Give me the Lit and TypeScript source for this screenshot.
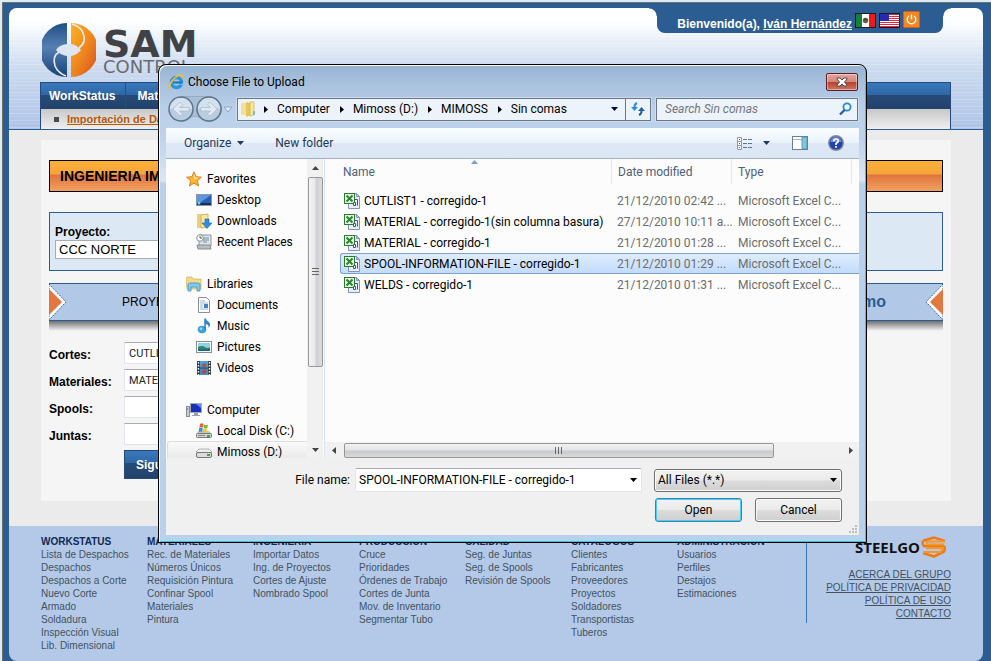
import { LitElement, html, svg, css, nothing } from "lit";
import { customElement, state } from "lit/decorators.js";
import { classMap } from "lit/directives/class-map.js";

const icon = (body: unknown, w = 16, h = 16) =>
  html`<svg width=${w} height=${h} viewBox="0 0 ${w} ${h}" aria-hidden="true">${body}</svg>`;

const drive = svg`<path d="M3 8h10l3 3H0z" fill="#e3e3e3"/><path d="M3 8h10l2 2H1z" fill="#c4c4c4"/><rect x=".5" y="10.500" width="15" height="4" rx="1" fill="#d5d5d5" stroke="#777"/><rect x="2" y="12" width="7" height="1" fill="#888"/><rect x="11" y="12" width="3" height="2" fill="#35b02c"/>`;

const ICONS: Record<string, unknown> = {
  star: icon(svg`<path d="M8 .8l2.100 4.900 5.300.5-4 3.500 1.200 5.300L8 12.200 3.400 15l1.200-5.300-4-3.500 5.300-.5z" fill="#fdb52d" stroke="#d9822b"/><path d="M8 2.500l1.400 4 3.600.3-5 2z" fill="#ffe596"/>`),
  desktop: icon(svg`<rect x=".5" y="2.500" width="15" height="11" fill="#2c60b4" stroke="#8a97a8"/><path d="M1 3h14L5 10H1z" fill="#5d98de"/><path d="M1 11h14v2H1z" fill="#1c2f4d"/><circle cx="3" cy="11" r="1.500" fill="#6bd1ff"/>`),
  downloads: icon(svg`<path d="M1 1h5v14H1z" fill="#ecd07a"/><path d="M5 2l7-1v13l-7 1z" fill="#f7e7a8" stroke="#d8b654"/><path d="M9 6h4v4h3l-5 5.500L6 10h3z" fill="#2e8fdc" stroke="#1b65ad" stroke-width=".6"/>`),
  recent: icon(svg`<path d="M3 1h12v11H3z" fill="#dfe3e6" stroke="#90979c"/><path d="M7 4h6M7 6h6M7 8h4" stroke="#7390a8"/><path d="M1 11h13l1 4H2z" fill="#b9bec2" stroke="#878c90"/><circle cx="4" cy="4" r="3.300" fill="#fff" stroke="#8a8f94"/><path d="M4 2v2h2" stroke="#555" fill="none"/>`),
  libraries: icon(svg`<path d="M0 3l1-2h5l1 2h8v10H1z" fill="#f1d88a" stroke="#d3b055" stroke-width=".7"/><path d="M2 15V9q0-2 2-2h8q2 0 2 2v6h-3v-4H5v4z" fill="#7ecbf0" stroke="#3f92c8" stroke-width=".8"/>`),
  documents: icon(svg`<path d="M2.500.5h8l3 3v12h-11z" fill="#fff" stroke="#8a9099"/><path d="M4 4h5M4 6h8M4 8h3M4 10h3M4 12h8" stroke="#9fb4cb"/><rect x="8" y="7" width="4" height="4" fill="#3f83c9"/>`),
  music: icon(svg`<ellipse cx="6" cy="11.500" rx="4.300" ry="3.700" fill="#3ba0dc"/><path d="M8.200 12V.5h1.600q.7 2 3 3.600Q15.500 6.500 12.500 10q.8-3.500-2.700-4v6z" fill="#2f86c9"/><circle cx="5" cy="10.800" r="1.400" fill="#9ad8f8"/>`),
  pictures: icon(svg`<rect x=".5" y="2.500" width="15" height="11" fill="#fff" stroke="#8a9099"/><rect x="2" y="4" width="12" height="8" fill="#8fd0ee"/><path d="M2 8q4-2 7 0t5 0v2H2z" fill="#2f8a5a"/><path d="M2 10h12v2H2z" fill="#1f6a8a"/>`),
  videos: icon(svg`<rect x="1" y="1" width="14" height="14" fill="#343a40"/><rect x="4" y="1" width="8" height="6.500" fill="#4f9cd6"/><rect x="4" y="8.500" width="8" height="6.500" fill="#3f8ccc"/><path d="M5 6l3-3 3 2-2 2zM5 12l4-3 2 3-3 2z" fill="#b34a3c"/><path d="M2.500 2v13M13.500 2v13" stroke="#fff" stroke-width="1.400" stroke-dasharray="1.500 1.500"/>`),
  computer: icon(svg`<rect x=".5" y="4.500" width="3" height="10" fill="#c9cdd1" stroke="#888e94"/><rect x="4.500" y="1.500" width="11" height="9" fill="#1633b8" stroke="#a4abb3"/><path d="M10 2h5v4z" fill="#5f8ef0"/><path d="M8 11h4v2h2v1H6v-1h2z" fill="#9aa1a8"/><rect x="1" y="6" width="1" height="2" fill="#3c3"/>`),
  windrive: icon(svg`${drive}<path d="M4 1q2-1.500 3.500 0L7 4.500Q5 3.500 3.400 4.500z" fill="#e8602c"/><path d="M8 1.500q2 1 4 0l-.6 3.500Q9.500 6 7.500 5z" fill="#7ab83a"/><path d="M3.200 5Q5 4 6.800 5L6.200 9Q4.500 8 2.700 9z" fill="#3b8de0"/><path d="M7.300 5.500q2 1 4 0l-.7 3.500Q8.700 10 6.700 9z" fill="#f8c52b"/>`),
  drive: icon(svg`<path d="M3 5h10l3 3v1H0V8z" fill="#ededed" stroke="#999" stroke-width=".7"/><rect x=".5" y="8.500" width="15" height="5" rx="1.500" fill="#d9dbdd" stroke="#777"/><rect x="11" y="10" width="3" height="2" fill="#35b02c"/>`),
  excel: icon(svg`<path d="M4.500.5h8l3 3v12h-11z" fill="#e8effa" stroke="#7e95c4"/><path d="M12.500.5l3 3h-3z" fill="#b8c8e8" stroke="#7e95c4"/><rect x=".5" y=".5" width="10" height="10" fill="#e8f5e4" stroke="#2d7a31"/><path d="M2.500 2.500l6 6M8.500 2.500l-6 6" stroke="#2a8630" stroke-width="2"/><path d="M11 6.500h2.500v6M9.500 9.500h2v3h-2z" stroke="#3b5590" fill="#fff"/>`),
  ie: icon(svg`<circle cx="8.500" cy="8.500" r="5" fill="none" stroke="#2a95dd" stroke-width="3.600"/><path d="M5 8.500h9" stroke="#1d78c4" stroke-width="2.200"/><path d="M10 10.800h6v-1.500z" fill="#a9c0db"/><path d="M2 15.500Q-.5 14 3 8.500T11 1.500Q15.500 0 14.600 4" fill="none" stroke="#f0bd35" stroke-width="1.800"/>`),
  folder: icon(svg`<path d="M0 2h5v12H0z" fill="#f2e097"/><path d="M5 1l5 1v12l-5 2z" fill="#e3c65c"/><path d="M9 1h4v13l-4 1z" fill="#f6e6a0" stroke="#d4b64f" stroke-width=".8"/><path d="M12 10h2v4h-2z" fill="#79b6e2"/>`, 15, 16),
  refresh: icon(svg`<path d="M7 2Q4.500 3 4.500 6v2" fill="none" stroke="#2d8fd6" stroke-width="2"/><path d="M1 6h7l-3.500 4z" fill="#2d8fd6"/><path d="M9 14q2.500-1 2.500-4V8" fill="none" stroke="#2060a8" stroke-width="2"/><path d="M8 10h7l-3.500-4z" fill="#2060a8"/>`),
  search: icon(svg`<circle cx="9" cy="5" r="3.600" fill="#eaf5fd" stroke="#2c86cb" stroke-width="1.800"/><path d="M6.500 8L2 12.500" stroke="#2d5fae" stroke-width="2.400"/>`, 14, 14),
  view: icon(svg`<path d="M.5.500h4v12h-4zM.5 4.500h4M.5 8.500h4" fill="#fff" stroke="#8b9aae"/><path d="M2 2h1v1H2zM2 10h1v1H2z" fill="#4a6a94"/><path d="M2 6h1v1H2z" fill="#d22"/><path d="M6 2.500h9M6 6.500h9M6 10.500h9" stroke="#5f7796" stroke-dasharray="4 1"/>`, 16, 13),
  pane: icon(svg`<rect x=".5" y=".5" width="15" height="13" fill="#fff" stroke="#6d7f95"/><path d="M1 3.500h14" stroke="#a8b6c8"/><rect x="10" y="1" width="5" height="12" fill="#7cc9e0" stroke="#4e8aa5" stroke-width=".8"/>`, 16, 14),
  help: icon(svg`<circle cx="8" cy="8" r="7.300" fill="#2343ab" stroke="#8a8f9c" stroke-width="1.400"/><path d="M2.500 7a5.500 5 0 0 1 11 0z" fill="#6c90df"/><path d="M5.700 6.300Q5.800 4 8 4t2.300 2Q10.300 7.300 8 8.500V10" fill="none" stroke="#fff" stroke-width="1.700"/><rect x="7.100" y="11" width="1.800" height="1.700" fill="#fff"/>`),
  close: icon(svg`<path d="M2 1h3l2 2 2-2h3v1L9.500 5 12 8v1H9L7 7 5 9H2V8l2.500-3L2 2z" fill="#fff" stroke="#5a4a50"/>`, 14, 10),
  history: icon(svg`<path d="M14 1.500h28a12.500 12.500 0 0 1 0 25q-6 0-9-4-5-3-10 0-3 4-9 4z" fill="#a9bfd6" stroke="#96abc3"/><g fill="#b9cde1" stroke="#60748b" stroke-width="1.500"><circle cx="14" cy="14" r="12"/><circle cx="42" cy="14" r="12"/></g><g fill="#d3e0ed"><path d="M3 14a11 11 0 0 1 22 0q-11-5-22 0z"/><path d="M31 14a11 11 0 0 1 22 0q-11-5-22 0z"/></g><g fill="#e1eaf3" stroke="#a9bccf" stroke-width=".7"><path d="M6 14l7-7 2.500 2.500-3 3H22v3.500h-9.500l3 3L13 21z"/><path d="M50 14l-7-7-2.500 2.500 3 3H34v3.500h9.500l-3 3L43 21z"/></g>`, 56, 28),
  down: icon(svg`<path d="M0 0h7L3.500 4z" fill="currentColor"/>`, 7, 4),
  up: icon(svg`<path d="M0 4h7L3.500 0z" fill="currentColor"/>`, 7, 4),
  right: icon(svg`<path d="M0 0v7l4-3.500z" fill="currentColor"/>`, 4, 7),
  left: icon(svg`<path d="M4 0v7L0 3.500z" fill="currentColor"/>`, 4, 7),
  mexico: icon(svg`<rect width="21" height="15" fill="#151a2c"/><rect x="1" y="1" width="6" height="13" fill="#12803a"/><rect x="7" y="1" width="7" height="13" fill="#fff"/><rect x="14" y="1" width="6" height="13" fill="#f01818"/><circle cx="10.500" cy="7.500" r="2.800" fill="#70603c"/><circle cx="10.500" cy="6.500" r="1.300" fill="#2f4a30"/>`, 21, 15),
  usa: icon(svg`<rect width="21" height="15" fill="#151a2c"/><rect x="1" y="1" width="19" height="13" fill="#fff"/><path d="M1 1.500h19M1 3.500h19M1 5.500h19M1 7.500h19M1 9.500h19M1 11.500h19M1 13.500h19" stroke="#e8283a"/><rect x="1" y="1" width="9" height="7" fill="#2a2ab0"/>`, 21, 15),
  power: icon(svg`<rect x=".5" y=".5" width="16" height="16" rx="1" fill="#f5861f" stroke="#c8641a"/><path d="M6 5a4.300 4.300 0 1 0 5 0M8.500 3.500v5" fill="none" stroke="#fff" stroke-width="1.400"/>`, 17, 17),
};

const LOGO = html`<svg width="54" height="54" viewBox="0 0 54 54" aria-hidden="true">
  <defs>
    <linearGradient id="lb" x1="0" y1="0" x2="0" y2="1"><stop offset="0" stop-color="#1f4f86"/><stop offset=".45" stop-color="#5680b4"/><stop offset="1" stop-color="#174276"/></linearGradient>
    <linearGradient id="lo" x1="0" y1="0" x2="1" y2="1"><stop offset="0" stop-color="#fbb321"/><stop offset=".5" stop-color="#f0861f"/><stop offset="1" stop-color="#d34e1b"/></linearGradient>
  </defs>
  <path d="M25 0a27 27 0 0 0 0 54z" fill="url(#lb)"/>
  <path d="M29 0a27 27 0 0 1 0 54z" fill="url(#lo)"/>
  <path d="M14 27q3-5 11-6h4q6 1 10 6-4 5-10 6h-4q-7-1-11-6z" fill="#dde6f4"/>
  <path d="M17 29Q10 33 13 43q3 7 11 10M37 25q8-6 4-15Q39 4 30 1" fill="none" stroke="#e6ecf6" stroke-width="1.600"/>
</svg>`;

const STEEL = html`<svg width="26" height="23" viewBox="0 0 26 23" aria-hidden="true">
  <path d="M24 5L13 1.500 3 4.500Q0 7 3 10h19q3 1 1 5.500l-10 5L2 17" fill="none" stroke="#ee7a18" stroke-width="2.600"/>
  <path d="M24 5.500H7Q4 6.500 7 8.500h16M2 16h18l2-4H5" fill="none" stroke="#f9962a" stroke-width="2"/>
</svg>`;

const FOOTER: [string, string[]][] = [
  ["WORKSTATUS", ["Lista de Despachos", "Despachos", "Despachos a Corte", "Nuevo Corte", "Armado", "Soldadura", "Inspección Visual", "Lib. Dimensional"]],
  ["MATERIALES", ["Rec. de Materiales", "Números Únicos", "Requisición Pintura", "Confinar Spool", "Materiales", "Pintura"]],
  ["INGENIERIA", ["Importar Datos", "Ing. de Proyectos", "Cortes de Ajuste", "Nombrado Spool"]],
  ["PRODUCCIÓN", ["Cruce", "Prioridades", "Órdenes de Trabajo", "Cortes de Junta", "Mov. de Inventario", "Segmentar Tubo"]],
  ["CALIDAD", ["Seg. de Juntas", "Seg. de Spools", "Revisión de Spools"]],
  ["CATÁLOGOS", ["Clientes", "Fabricantes", "Proveedores", "Proyectos", "Soldadores", "Transportistas", "Tuberos"]],
  ["ADMINISTRACIÓN", ["Usuarios", "Perfiles", "Destajos", "Estimaciones"]],
];

@customElement("site-header")
class SiteHeader extends LitElement {
  static styles = css`
    :host { display: block; font: 12px/16px "Liberation Sans", Arial, sans-serif; }
    a { color: inherit; }
    .header {
      background:
        repeating-linear-gradient(rgba(255, 255, 255, .2) 0 1px, transparent 1px 3px, rgba(255, 255, 255, .1) 3px 4px, transparent 4px 7px),
        linear-gradient(#fff 0, #fdfeff 12%, #cbdaef 50%, #aec4e6 100%);
      border-bottom: 1px solid #2b5d93;
      border-radius: 8px 8px 0 0;
    }
    .top { display: flex; justify-content: space-between; align-items: flex-start; height: 74px; }
    .brand { display: flex; gap: 7px; padding: 15px 0 0 33px; }
    .words { display: flex; flex-direction: column; font-family: "DejaVu Sans", sans-serif; color: #414246; }
    .sam { font-size: 38px; line-height: 30px; font-weight: bold; padding-top: 6px; }
    .control { font-size: 18px; line-height: 16px; color: #6b6c70; }
    .tab {
      position: relative; display: flex; align-items: center; gap: 3px; height: 25px; box-sizing: border-box;
      margin-right: 40px; padding: 0 23px 0 20px; background: #2b5d93; color: #fff; font-weight: bold;
      border-radius: 0 0 8px 8px;
    }
    .tab::before, .tab::after { content: ""; position: absolute; top: 0; width: 8px; height: 8px; }
    .tab::before { right: 100%; background: radial-gradient(circle at 0 100%, transparent 7px, #2b5d93 8px); }
    .tab::after { left: 100%; background: radial-gradient(circle at 100% 100%, transparent 7px, #2b5d93 8px); }
    .welcome { padding-top: 6px; }
    .tools { display: flex; align-items: center; gap: 3px; }
    .tools button { display: flex; border: 0; padding: 0; background: none; }
    .tools button.off { padding-bottom: 3px; }
    nav { margin: 0 32px 0 31px; border: solid #244a7a; border-width: 1px 1px 0; }
    .menu {
      display: flex; height: 26px;
      background: linear-gradient(#3a78bd 0, #2f67a4 45%, #264b78 46%, #22426c 100%);
    }
    .menu a {
      display: flex; align-items: center; padding: 0 10px 0 8px; color: #fff; font-weight: bold; text-decoration: none;
      border-right: 1px solid #2b4f7d;
    }
    .menu a + a { padding-left: 11px; }
    .sub {
      display: flex; align-items: center; gap: 8px; height: 20px; padding-left: 13px;
      background: linear-gradient(#c8c8c8, #efefef); font-size: 11px; font-weight: bold; color: #b75a0c;
    }
    .sub::before { content: ""; width: 5px; height: 5px; background: #444b50; }
  `;
  render() {
    return html`<header class="header">
      <div class="top">
        <div class="brand">${LOGO}<div class="words"><span class="sam">SAM</span><span class="control">CONTROL</span></div></div>
        <div class="tab">
          <span class="welcome">Bienvenido(a), <a href="#perfil">Iván Hernández</a></span>
          <div class="tools">
            <button aria-label="Español">${ICONS.mexico}</button>
            <button aria-label="English">${ICONS.usa}</button>
            <button class="off" aria-label="Salir">${ICONS.power}</button>
          </div>
        </div>
      </div>
      <nav>
        <div class="menu"><a href="#workstatus">WorkStatus</a><a href="#materiales">Materiales</a></div>
        <div class="sub"><a href="#importacion">Importación de Datos</a></div>
      </nav>
    </header>`;
  }
}

@customElement("import-form")
class ImportForm extends LitElement {
  static styles = css`
    :host { display: block; background: #ebebeb; padding: 10px 32px 25px; font: 12px/16px "Liberation Sans", Arial, sans-serif; }
    .sheet { background: #f5f5f5; min-height: 361px; box-sizing: border-box; padding: 20px 8px; color: #000; }
    h1 {
      margin: 0 0 20px; padding: 7px 10px; font-size: 14px; line-height: 16px; border: 1px solid #000;
      background: linear-gradient(#fbb037 0, #f5a53b 44%, #e0733d 46%, #f0a260 100%);
    }
    .project {
      display: flex; flex-direction: column; align-items: flex-start; box-sizing: border-box; height: 59px;
      padding: 11px 5px; border: 1px solid #2b5d93; background: #dde8f5; font-weight: bold;
    }
    .project select {
      appearance: none; width: 200px; height: 20px; padding: 0 3px; border: 1px solid #a5acb5; border-radius: 0;
      background: #fff; color: #000; font: 13px/16px "Liberation Sans", Arial, sans-serif;
    }
    .steps {
      display: flex; align-items: center; justify-content: space-between; margin-top: 12px; height: 36px;
      border: solid #2b5d93; border-width: 1px 0; background: #b1c8e6;
    }
    .steps svg { display: block; }
    .step { flex: 1; padding-left: 55px; }
    .step.last { flex: none; padding: 0 39px 0 0; font-size: 16px; font-weight: bold; color: #2b5d93; }
    .shade { height: 10px; background: linear-gradient(#707070, #f5f5f5); }
    form { display: grid; grid-template-columns: 75px 220px; gap: 5px 0; margin-top: 11px; align-items: center; }
    label { font-weight: bold; }
    form label { padding-top: 4px; }
    input {
      height: 22px; box-sizing: border-box; padding: 0 4px; border: 1px solid #e0e4ee; border-top-color: #a9abb3;
      color: #222; font: 11px/16px Roboto, "Open Sans", sans-serif; background: #fff;
    }
    .next {
      grid-column: 2; justify-self: start; height: 29px; padding: 0 11px; border: 1px solid #244a7a; color: #fff;
      font: bold 12px/16px "Liberation Sans", Arial, sans-serif;
      background: linear-gradient(#3a78bd 0, #2f67a4 44%, #264b78 46%, #22426c 100%);
    }
  `;
  render() {
    const rows = [["Cortes:", "CUTLIST1.csv"], ["Materiales:", "MATERIAL.csv"], ["Spools:", ""], ["Juntas:", ""]];
    return html`<main class="sheet">
      <h1>INGENIERIA IMPORTACIÓN</h1>
      <div class="project">
        <label for="proyecto">Proyecto:</label>
        <select id="proyecto"><option>CCC NORTE</option></select>
      </div>
      <div class="steps">
        <svg width="18" height="36" viewBox="0 0 18 36" aria-hidden="true"><path d="M0 0l17 18L0 36z" fill="#fff" stroke="#2b5d93" stroke-dasharray="1.500 1"/><path d="M0 5l13 13L0 31z" fill="#e2783f"/></svg>
        <span class="step">PROYECTO</span>
        <span class="step last">Último</span>
        <svg width="18" height="36" viewBox="0 0 18 36" aria-hidden="true"><path d="M18 0L1 18l17 18z" fill="#fff" stroke="#2b5d93" stroke-dasharray="1.500 1"/><path d="M18 5L5 18l13 13z" fill="#e2783f"/></svg>
      </div>
      <div class="shade"></div>
      <form>
        ${rows.map(([l, v], i) => html`<label for="f${i}">${l}</label><input id="f${i}" .value=${v}>`)}
        <button type="button" class="next">Siguiente</button>
      </form>
    </main>`;
  }
}

@customElement("site-footer")
class SiteFooter extends LitElement {
  static styles = css`
    :host {
      display: flex; padding: 10px 32px 9px; background: #b3c9e7; border-radius: 0 0 8px 8px;
      font: 10px/13px "Liberation Sans", Arial, sans-serif; color: #44525f;
    }
    .cols { display: grid; grid-template-columns: repeat(7, 106px); }
    h2 { margin: 0; font-size: 10px; line-height: 12px; color: #0e2a58; }
    ul { margin: 0; padding: 0; list-style: none; white-space: nowrap; }
    li a { color: inherit; text-decoration: none; }
    .side {
      flex: 1; display: flex; flex-direction: column; align-items: flex-end; align-self: flex-start;
      margin-left: 23px; border-left: 1px solid #3a74b8; height: 87px; white-space: nowrap;
    }
    .side a { color: inherit; }
    .steel {
      display: flex; align-items: center; gap: 1px; height: 22px; padding: 0 4px 10px 0; color: #111;
      font: bold 15px/20px "Open Sans", sans-serif;
    }
  `;
  render() {
    return html`
      <div class="cols">
        ${FOOTER.map(([t, items]) => html`<section><h2>${t}</h2><ul>${items.map((i) => html`<li><a href="#">${i}</a></li>`)}</ul></section>`)}
      </div>
      <div class="side">
        <div class="steel">STEELGO${STEEL}</div>
        ${["ACERCA DEL GRUPO", "POLÍTICA DE PRIVACIDAD", "POLÍTICA DE USO", "CONTACTO"].map((t) => html`<a href="#">${t}</a>`)}
      </div>`;
  }
}

const PLACES: { head: [string, string]; items: [string, string][] }[] = [
  { head: ["star", "Favorites"], items: [["desktop", "Desktop"], ["downloads", "Downloads"], ["recent", "Recent Places"]] },
  { head: ["libraries", "Libraries"], items: [["documents", "Documents"], ["music", "Music"], ["pictures", "Pictures"], ["videos", "Videos"]] },
  { head: ["computer", "Computer"], items: [["windrive", "Local Disk (C:)"], ["drive", "Mimoss (D:)"]] },
];

const FILES = [
  ["CUTLIST1 - corregido-1", "21/12/2010 02:42 ..."],
  ["MATERIAL - corregido-1(sin columna basura)", "27/12/2010 10:11 a..."],
  ["MATERIAL - corregido-1", "21/12/2010 01:28 ..."],
  ["SPOOL-INFORMATION-FILE - corregido-1", "21/12/2010 01:29 ..."],
  ["WELDS - corregido-1", "21/12/2010 01:31 ..."],
];

@customElement("file-dialog")
class FileDialog extends LitElement {
  @state() private selected = 3;

  static styles = css`
    :host { display: block; font: 12px/16px Roboto, "Open Sans", sans-serif; color: #000; }
    svg { display: block; flex: none; }
    button, input, select { font: inherit; color: inherit; margin: 0; }
    .window {
      border: 1px solid #000; border-radius: 8px 8px 0 0; padding: 0 7px 7px 7px;
      box-shadow: inset 1px 1px 0 #f2f8fd, inset -1px -1px 0 #35c6dd;
      background: linear-gradient(#98b4d2 0, #a9c2de 20px, #bad0ea 45px, #bfd3ea 75px, #dbe6f3 115px, #b9d1ea 119px);
    }
    .title { display: flex; align-items: center; gap: 4px; height: 31px; padding: 3px 1px 0 2px; box-sizing: border-box; }
    .title .name { flex: 1; }
    .close {
      display: flex; justify-content: center; align-items: center; width: 32px; height: 18px; padding: 0;
      border: 1px solid #5c1c28; border-radius: 2px; box-shadow: inset 0 0 0 1px rgba(255, 255, 255, .4);
      background: linear-gradient(#e3a79d 0, #d4867a 48%, #b6402c 50%, #cd7766 100%);
    }
    .bar { display: flex; align-items: center; height: 32px; gap: 5px; padding: 0 1px 6px 1px; box-sizing: border-box; }
    .bar .hist { display: flex; align-items: center; color: #dfeaf5; }
    .address, .search {
      display: flex; align-items: center; height: 23px; box-sizing: border-box; border: 1px solid #6c7785;
      box-shadow: 0 0 0 1px rgba(255, 255, 255, .3); background: #edf3fb;
    }
    .address { flex: 1; padding-left: 3px; margin-left: -1px; }
    .address button { border: 0; padding: 0 10px 0 9px; background: none; }
    .address button.drop { display: flex; align-items: center; margin-left: auto; padding: 0 7px; color: #000050; }
    .address button.go { display: flex; align-items: center; height: 21px; padding: 0 4px; border-left: 1px solid #6c7785; }
    .address .first { margin-left: 8px; }
    .search { width: 202px; padding: 0 5px 0 8px; }
    .search input { flex: 1; min-width: 0; border: 0; padding: 0; background: none; outline: none; }
    .search input::placeholder { font-style: italic; color: #71767d; opacity: 1; }
    .client { background: #f0f0f0; }
    .tools {
      display: flex; align-items: center; height: 31px; box-sizing: border-box; padding: 0 15px 0 18px; color: #1e395b;
      background: linear-gradient(#fafdff 0, #ebf3fc 48%, #dde7f5 52%, #dce7f5 100%); border-bottom: 1px solid #a3b1c5;
    }
    .tools button { display: flex; align-items: center; gap: 6px; border: 0; padding: 0; background: none; }
    .tools .new { margin: 0 auto 0 31px; }
    .tools .view { gap: 10px; }
    .tools .pane { margin: 0 20px 0 22px; }
    .browse { display: flex; height: 299px; background: #fcfcfc; }
    .tree { width: 141px; overflow: hidden; padding-top: 9px; box-sizing: border-box; }
    .tree ul { margin: 0 0 21px; padding: 0; list-style: none; }
    .tree li { display: flex; align-items: center; gap: 5px; height: 21px; padding-left: 30px; white-space: nowrap; }
    .tree li.head { padding-left: 20px; }
    .tree li.current { margin-left: 1px; padding-left: 28px; border: 1px solid #ddd; border-right: 0; border-radius: 3px 0 0 0; background: linear-gradient(#fafafa, #e6e6e6); height: 20px; }
    .vbar { display: flex; flex-direction: column; align-items: center; justify-content: space-between; width: 16px; padding: 7px 0 6px; box-sizing: border-box; background: #f1f1f1; color: #444; }
    .vthumb {
      display: flex; align-items: center; justify-content: center; box-sizing: border-box; width: 15px; height: 190px;
      margin: 7px 0 auto; border: 1px solid #979797; border-radius: 2px;
      background: linear-gradient(90deg, #f5f5f5, #e8e8ea 45%, #cfd0d3 55%, #dcdcde);
    }
    .vgrip { width: 7px; height: 8px; background: repeating-linear-gradient(#666 0 1px, transparent 1px 3px); }
    .files { flex: 1; min-width: 0; display: flex; flex-direction: column; margin-left: 1px; border-left: 1px solid #d6e5f5; overflow: hidden; }
    .listing { flex: 1; padding: 0 0 0 15px; }
    table { width: 100%; table-layout: fixed; border-collapse: separate; border-spacing: 0; }
    .c1 { width: 272px; } .c2, .c3 { width: 120px; }
    th { position: relative; height: 25px; padding: 0 0 0 6px; text-align: left; font-weight: normal; color: #4c607a; border-right: 1px solid #e2e9f2; }
    th:first-child { padding-left: 3px; }
    th:last-child { border: 0; }
    .sort { position: absolute; left: 131px; top: 1px; color: #7ba3c4; }
    .space td { height: 6px; padding: 0; border: 0; }
    td { height: 19px; padding: 0 0 0 5px; border: solid transparent; border-width: 1px 0; white-space: nowrap; color: #6d6d6d; }
    td:first-child { padding-left: 3px; border-left-width: 1px; border-radius: 3px 0 0 3px; }
    td:nth-child(3) { padding-left: 6px; }
    .file { display: flex; align-items: center; gap: 4px; color: #000; }
    tr.on td { border-color: #7da2ce; background: linear-gradient(#dfecfc, #c2dcfd); }
    .hbar { display: flex; align-items: center; justify-content: space-between; height: 16px; padding: 0 6px 0 7px; background: #f1f1f1; color: #444; }
    .hthumb {
      display: flex; align-items: center; justify-content: center; box-sizing: border-box; width: 430px; height: 15px;
      margin: 0 auto 0 8px; border: 1px solid #979797; border-radius: 2px;
      background: linear-gradient(#f2f2f2, #e4e4e6 45%, #c9cacd 55%, #dadadc);
    }
    .hgrip { width: 8px; height: 7px; background: repeating-linear-gradient(90deg, #666 0 1px, transparent 1px 3px); }
    .bottom { display: flex; flex-direction: column; gap: 6px; height: 77px; box-sizing: border-box; padding: 10px 17px 0 0; position: relative; }
    .line { display: flex; justify-content: flex-end; align-items: center; }
    .combo { position: relative; display: flex; align-items: center; margin: 0 12px 0 5px; }
    .combo svg { position: absolute; right: 5px; pointer-events: none; }
    .combo.wide { flex: 0 1 287px; }
    .combo input { width: 100%; height: 24px; box-sizing: border-box; padding: 0 20px 0 3px; border: 1px solid #e0e4ee; border-top-color: #a9abb3; border-radius: 2px; background: #fff; }
    .combo.type { margin: 0; width: 188px; }
    .combo select, .push {
      appearance: none; box-sizing: border-box; border: 1px solid #707070; border-radius: 3px;
      box-shadow: inset 0 0 0 1px #fbfbfb; background: linear-gradient(#f2f2f2 0, #ebebeb 48%, #dcdcdc 52%, #cfcfcf 100%);
    }
    .combo select { width: 100%; height: 23px; padding: 0 3px; }
    .push { width: 87px; height: 24px; padding: 0; margin-left: 13px; }
    .push.main { border-color: #3c7fb1; box-shadow: inset 0 0 0 1px #48d0f8; }
    .grip { position: absolute; right: 2px; bottom: 2px; }
  `;

  private crumb(name: string, first = false) {
    return html`<span class=${classMap({ first })}>${ICONS.right}</span><button>${name}</button>`;
  }

  render() {
    return html`<section class="window" role="dialog" aria-label="Choose File to Upload">
      <div class="title">${ICONS.ie}<span class="name">Choose File to Upload</span>
        <button class="close" aria-label="Close">${ICONS.close}</button></div>
      <div class="bar">
        <div class="hist">${ICONS.history}${icon(svg`<path d="M1 1h8L5 6z" fill="#dce8f4" stroke="#8fa5bf"/>`, 10, 7)}</div>
        <div class="address">${ICONS.folder}
          ${this.crumb("Computer", true)}${this.crumb("Mimoss (D:)")}${this.crumb("MIMOSS")}${this.crumb("Sin comas")}
          <button class="drop" aria-label="Previous locations">${ICONS.down}</button>
          <button class="go" aria-label="Refresh">${ICONS.refresh}</button>
        </div>
        <label class="search"><input type="text" aria-label="Search" placeholder="Search Sin comas">${ICONS.search}</label>
      </div>
      <div class="client">
        <div class="tools">
          <button>Organize ${ICONS.down}</button>
          <button class="new">New folder</button>
          <button class="view" aria-label="Change your view">${ICONS.view}${ICONS.down}</button>
          <button class="pane" aria-label="Preview pane">${ICONS.pane}</button>
          <button aria-label="Help">${ICONS.help}</button>
        </div>
        <div class="browse">
          <div class="tree">
            ${PLACES.map((g) => html`<ul>
              <li class="head">${ICONS[g.head[0]]}${g.head[1]}</li>
              ${g.items.map(([i, n]) => html`<li class=${classMap({ current: n === "Mimoss (D:)" })}>${ICONS[i]}${n}</li>`)}
            </ul>`)}
          </div>
          <div class="vbar">${ICONS.up}<div class="vthumb"><div class="vgrip"></div></div>${ICONS.down}</div>
          <div class="files">
            <div class="listing">
              <table>
                <colgroup><col class="c1"><col class="c2"><col class="c3"><col></colgroup>
                <thead><tr><th>Name<span class="sort">${ICONS.up}</span></th><th>Date modified</th><th>Type</th><th></th></tr></thead>
                <tbody>
                  <tr class="space"><td colspan="4"></td></tr>
                  ${FILES.map(([n, d], i) => html`<tr class=${i === this.selected ? "on" : nothing} @click=${() => (this.selected = i)}>
                    <td><span class="file">${ICONS.excel}${n}</span></td><td>${d}</td><td>Microsoft Excel C...</td><td></td></tr>`)}
                </tbody>
              </table>
            </div>
            <div class="hbar">${ICONS.left}<div class="hthumb"><div class="hgrip"></div></div>${ICONS.right}</div>
          </div>
        </div>
        <div class="bottom">
          <div class="line">
            <label for="name">File name:</label>
            <div class="combo wide"><input id="name" .value=${FILES[this.selected][0]}>${ICONS.down}</div>
            <div class="combo type"><select aria-label="File type"><option>All Files (*.*)</option></select>${ICONS.down}</div>
          </div>
          <div class="line"><button class="push main">Open</button><button class="push">Cancel</button></div>
          <span class="grip">${icon(svg`<path d="M6 0h2v2H6zM3 3h2v2H3zM6 3h2v2H6zM0 6h2v2H0zM3 6h2v2H3zM6 6h2v2H6z" fill="#bdbdbd"/>`, 8, 8)}</span>
        </div>
      </div>
    </section>`;
  }
}

@customElement("app-root")
class AppRoot extends LitElement {
  static styles = css`
    :host { display: block; position: relative; padding: 2px 0 0 2px; background: #dcecf0; }
    .frame { border: solid #70716c; border-width: 1px 0 0 1px; background: #2b5d93; padding: 5px 8px 0 6px; }
    .dialog { position: absolute; left: 158px; right: 124px; top: 64px; }
  `;
  render() {
    return html`<div class="frame"><site-header></site-header><import-form></import-form><site-footer></site-footer></div>
      <file-dialog class="dialog"></file-dialog>`;
  }
}
